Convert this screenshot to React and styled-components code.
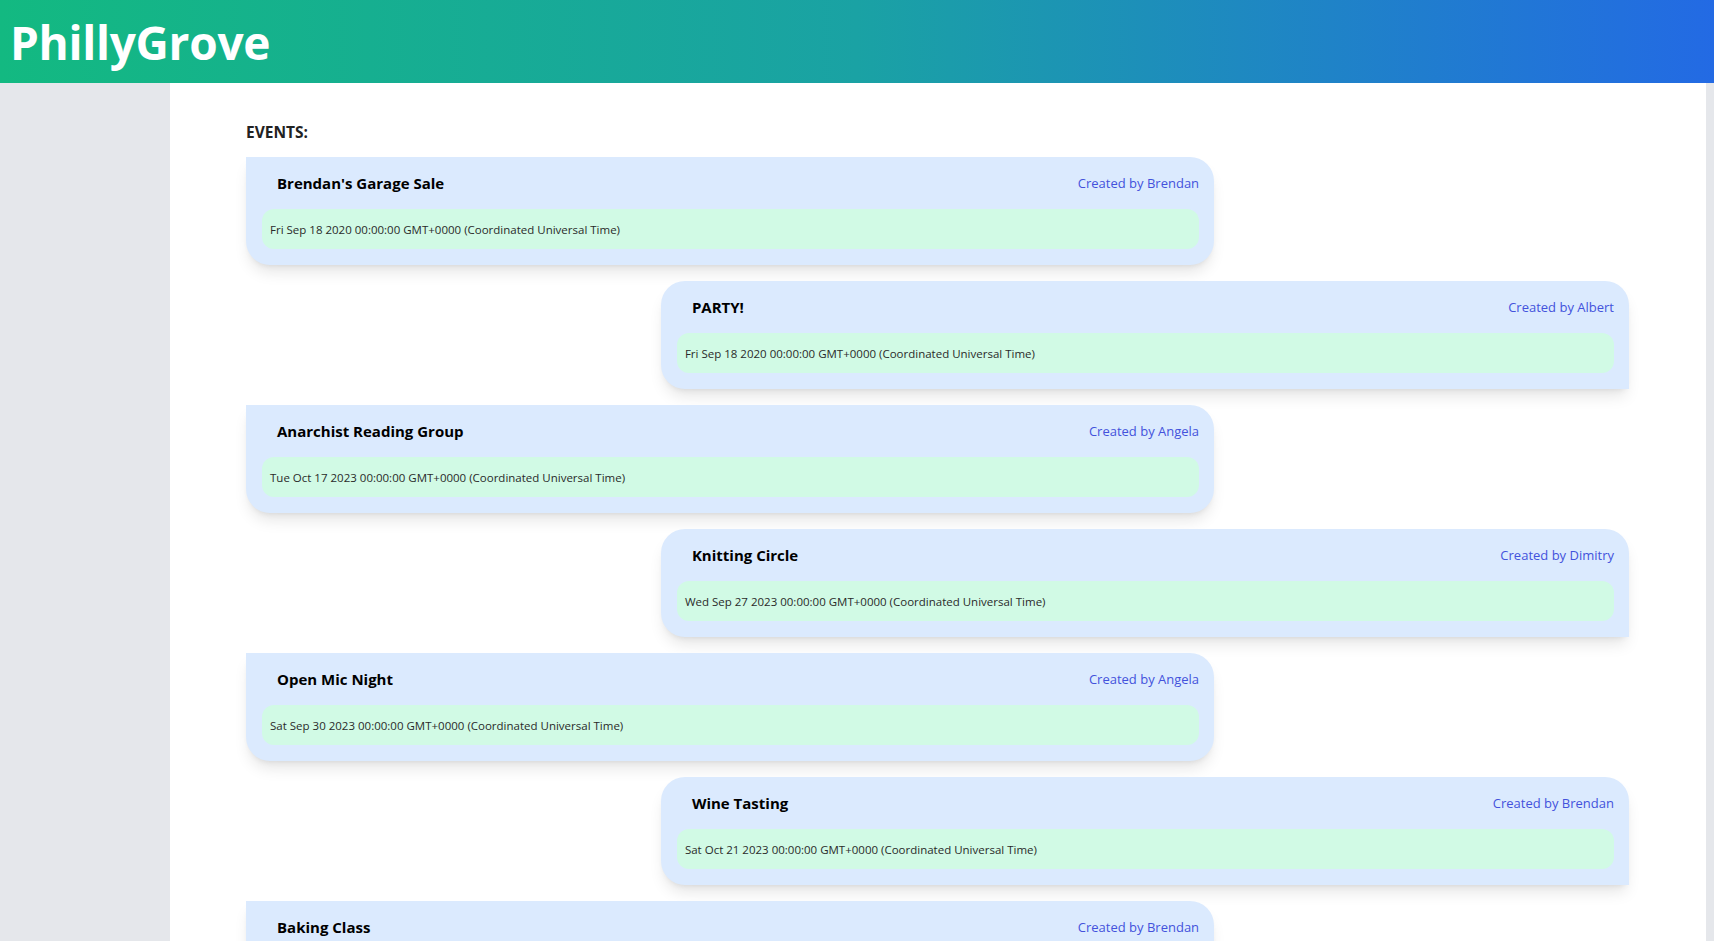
import React from "react";
import styled, { createGlobalStyle } from "styled-components";

const GlobalStyle = createGlobalStyle`
  body {
    margin: 0;
    font-family: "Open Sans", "Noto Sans", sans-serif;
    background: #e5e7eb;
  }
`;

const Header = styled.header`
  height: 83px;
  display: flex;
  align-items: center;
  padding: 0 10px;
  background: linear-gradient(to right, #13b981, #1aa2a4 50%, #236ae4);
`;

const Logo = styled.h1`
  margin: 0;
  color: #fff;
  font-size: 46px;
  font-weight: 700;
  letter-spacing: -0.3px;
`;

const Layout = styled.div`
  display: grid;
  grid-template-columns: 170px 1fr;
  min-height: calc(100vh - 83px);
  padding-right: 8px;
`;

const Sidebar = styled.aside`
  background: #e5e7eb;
`;

const Main = styled.main`
  background: #fff;
  padding: 39px 77px 40px 76px;
`;

const SectionTitle = styled.h2`
  margin: 0 0 15px;
  font-size: 15.5px;
  font-weight: 700;
  color: #222;
  line-height: 20px;
`;

const EventList = styled.div`
  display: flex;
  flex-direction: column;
  gap: 16px;
`;

const Card = styled.div`
  width: 70%;
  align-self: ${(p) => (p.$right ? "flex-end" : "flex-start")};
  box-sizing: border-box;
  background: #dbeafe;
  border-radius: 24px;
  ${(p) => (p.$right ? "border-bottom-right-radius: 0;" : "border-top-left-radius: 0;")}
  padding: 14px 15px 16px 16px;
  box-shadow: 0 10px 15px -3px rgba(0, 0, 0, 0.1), 0 4px 6px -4px rgba(0, 0, 0, 0.1);
`;

const CardTop = styled.div`
  display: flex;
  justify-content: space-between;
  align-items: center;
  padding-left: 15px;
  height: 23px;
  margin-bottom: 15px;
`;

const EventName = styled.h3`
  margin: 0;
  font-size: 15px;
  font-weight: 700;
  color: #000;
`;

const Creator = styled.span`
  font-size: 13px;
  color: #4352dc;
`;

const DateBox = styled.div`
  height: 40px;
  display: flex;
  align-items: center;
  padding: 0 8px;
  background: #d1fae5;
  border-radius: 12px;
  font-size: 11.5px;
  color: #2a2a2a;
`;

const events = [
  { name: "Brendan's Garage Sale", by: "Brendan", date: "Fri Sep 18 2020" },
  { name: "PARTY!", by: "Albert", date: "Fri Sep 18 2020" },
  { name: "Anarchist Reading Group", by: "Angela", date: "Tue Oct 17 2023" },
  { name: "Knitting Circle", by: "Dimitry", date: "Wed Sep 27 2023" },
  { name: "Open Mic Night", by: "Angela", date: "Sat Sep 30 2023" },
  { name: "Wine Tasting", by: "Brendan", date: "Sat Oct 21 2023" },
  { name: "Baking Class", by: "Brendan", date: "Sun Oct 22 2023" },
];

const App = () => {
  return (
    <>
      <GlobalStyle />
      <Header>
        <Logo>PhillyGrove</Logo>
      </Header>
      <Layout>
        <Sidebar />
        <Main>
          <SectionTitle>EVENTS:</SectionTitle>
          <EventList>
            {events.map((ev, i) => (
              <Card key={ev.name} $right={i % 2 === 1}>
                <CardTop>
                  <EventName>{ev.name}</EventName>
                  <Creator>Created by {ev.by}</Creator>
                </CardTop>
                <DateBox>
                  {ev.date} 00:00:00 GMT+0000 (Coordinated Universal Time)
                </DateBox>
              </Card>
            ))}
          </EventList>
        </Main>
      </Layout>
    </>
  );
};

export default App;
